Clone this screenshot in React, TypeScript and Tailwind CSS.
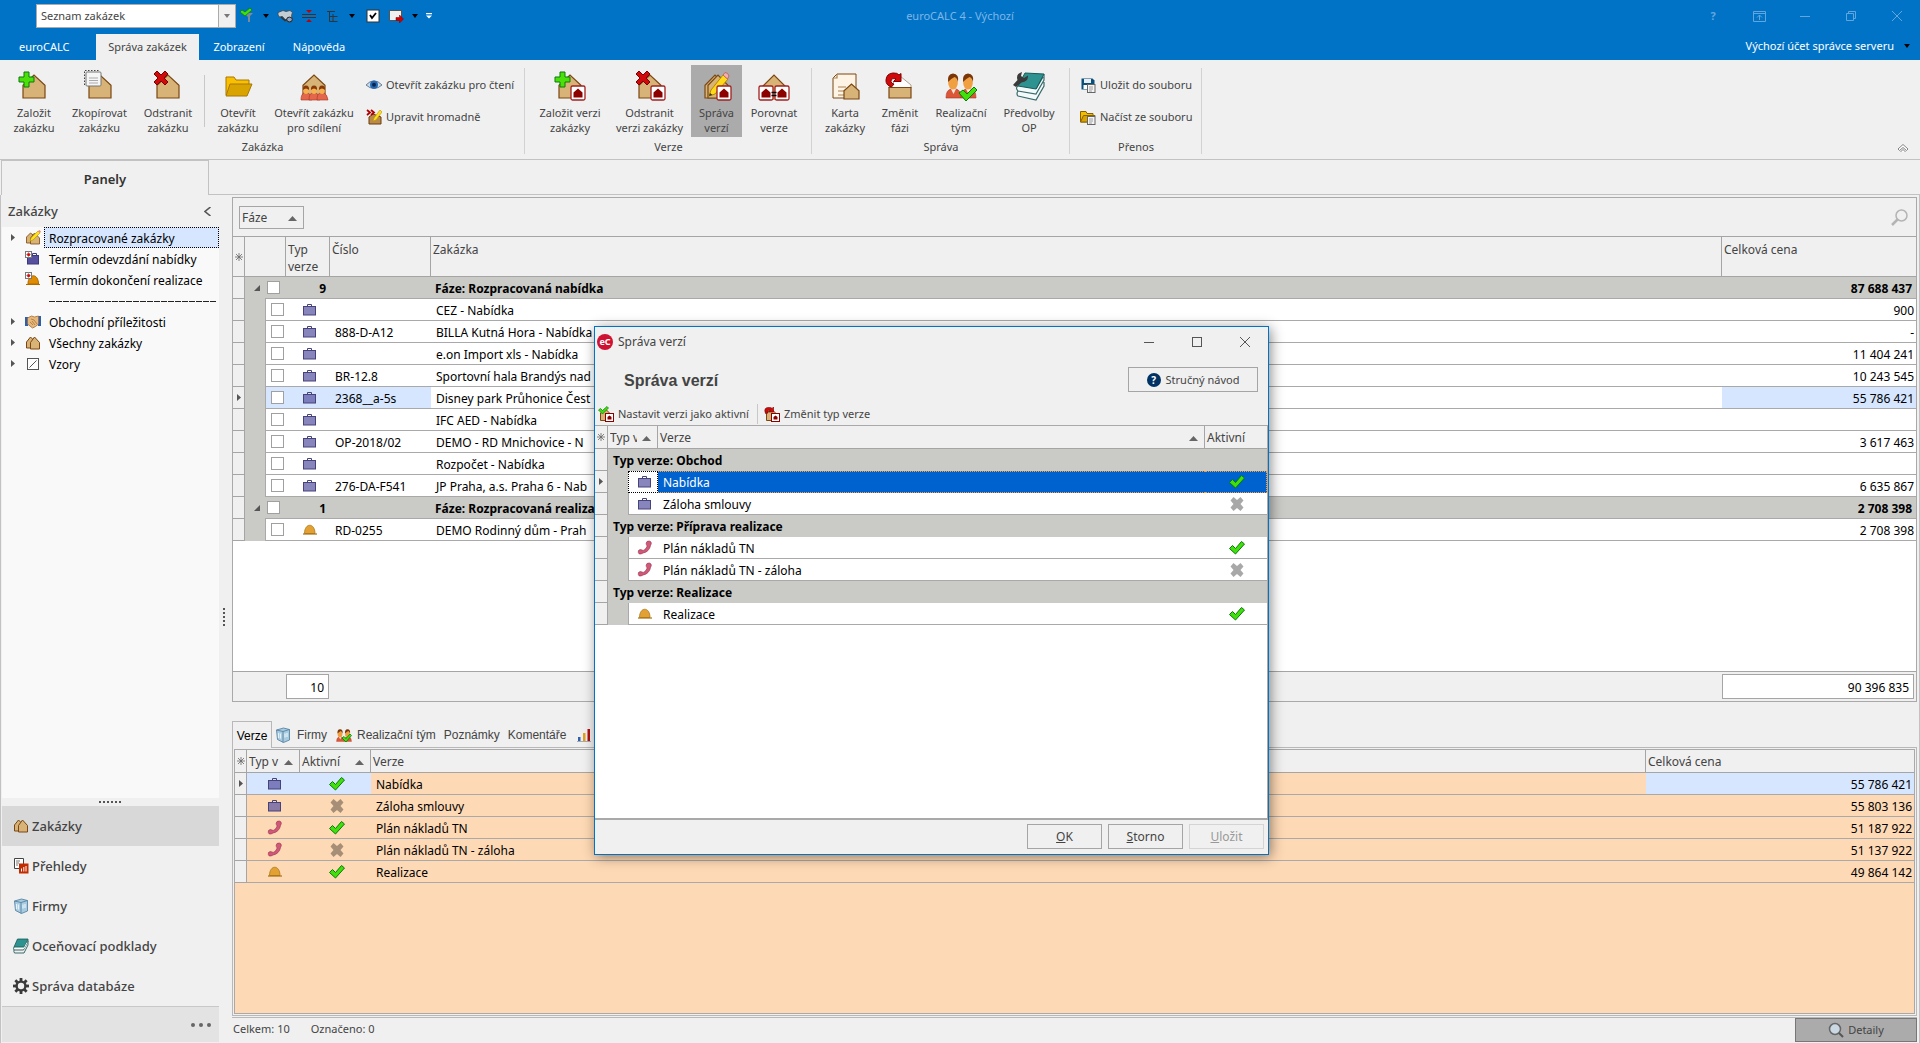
import type { ReactNode } from "react";

type IconProps = { className?: string };

const TAN = "#d7b377";
const BROWN = "#7a4712";

/* ---------- shared shapes ---------- */

const House = ({ x = 5, y = 6, w = 22, h = 23 }: { x?: number; y?: number; w?: number; h?: number }) => (
  <path
    d={`M${x} ${y + h}V${y + h * 0.45}L${x + w / 2} ${y}L${x + w} ${y + h * 0.45}V${y + h}Z`}
    fill={TAN}
    stroke={BROWN}
    strokeWidth="1.2"
  />
);

const PlusMark = () => <path d="M6 3h5v5h5v5h-5v5H6v-5H1V8h5z" fill="#4be00a" stroke="#0a7a0a" />;

const CrossMark = () => (
  <path d="M2 5l3-3 4 4 4-4 3 3-4 4 4 4-3 3-4-4-4 4-3-3 4-4z" fill="#d00a0a" stroke="#7c0000" />
);

const Badge = ({ x, y }: { x: number; y: number }) => (
  <g>
    <rect x={x} y={y} width="14" height="14" rx="1.5" fill="#fff" stroke="#a02020" strokeWidth="1.3" />
    <path d={`M${x + 2.5} ${y + 11.5}V${y + 6.5}L${x + 7} ${y + 2.5}l4.500 4v5z`} fill="#8c0000" />
  </g>
);

const Pencil = () => (
  <g>
    <path d="M8 27l2-6L22 6l5 4-13 15z" fill="#ffd91a" stroke="#b88a00" />
    <path d="M22 6l2-2.500q3 0 4 3.500l-1.500 3z" fill="#f4b0b0" stroke="#b86a6a" />
    <path d="M8 27l1-3 2.500 2z" fill="#333" />
  </g>
);

const PeoplePair = () => (
  <g>
    {[8, 23].map((cx) => (
      <g key={cx}>
        <path d={`M${cx - 7} 29q0-8 5-9h5q5 1 5 9z`} fill="#dc5638" stroke="#a8321c" strokeWidth=".6" />
        <path d={`M${cx - 2} 20l2.500 5 2.500-5z`} fill="#fbe6d8" />
        <ellipse cx={cx} cy="14" rx="4.800" ry="6.500" fill="#f0a040" />
        <path d={`M${cx - 5} 13q-1-8 5-8.500q6.500.5 5 8.500q-1-4-3.500-5q-4 2-6.500 5z`} fill="#7a3608" />
      </g>
    ))}
  </g>
);

const PeopleTrio = () => (
  <g>
    {[8, 16, 24].map((cx) => (
      <g key={cx}>
        <path d={`M${cx - 5} 31q0-6 3-7h4q3 1 4 7z`} fill="#e2674c" stroke="#a8321c" strokeWidth=".6" />
        <ellipse cx={cx} cy="21.500" rx="2.800" ry="3.500" fill="#f6b050" />
        <path d={`M${cx - 3} 21q-.5-4.500 3-4.500t3 4.500q-3-3-6 0z`} fill="#8a3a08" />
      </g>
    ))}
  </g>
);

const Svg32 = ({ children }: { children: ReactNode }) => (
  <svg viewBox="0 0 32 32" className="size-8 shrink-0">
    {children}
  </svg>
);

const Svg16 = ({ children, className = "" }: { children: ReactNode; className?: string }) => (
  <svg viewBox="0 0 16 16" className={`size-4 shrink-0 ${className}`}>
    {children}
  </svg>
);

/* ---------- small icons ---------- */

const CheckIcon = () => (
  <Svg16>
    <path d="M.5 8.500l3-3 3 3 6-7 3 2.500-9 10z" fill="#41e00c" stroke="#087a08" strokeWidth="1" />
  </Svg16>
);

const GrayCross = () => (
  <Svg16>
    <path d="M1.500 4.500l3-3.500 3.500 3 3.500-3 3 3.500-3 3.500 3 3.500-3 3.500-3.500-3-3.500 3-3-3.500 3-3.500z" fill="#000" fillOpacity=".34" />
  </Svg16>
);

const CaseIcon = () => (
  <Svg16>
    <path d="M5.500 4V2.500h4V4" fill="none" stroke="#46427a" />
    <rect x="1.500" y="4.500" width="12" height="8.500" fill="#5550a0" fillOpacity=".7" stroke="#46427a" />
  </Svg16>
);

const HelmetIcon = () => (
  <Svg16>
    <path d="M2.500 11.500C2.500.5 13 .5 13 11.500z" fill="#e3a133" stroke="#a87818" strokeWidth=".8" />
    <path d="M1 12h14" stroke="#a8700c" strokeWidth="1.200" />
  </Svg16>
);

const PhoneIcon = () => (
  <Svg16>
    <path
      d="M10 1.500q2.500-1.200 4 .5.8 1.500-.5 3.500-.5 3-2.500 5-2 2-5 2.500-2 1.500-4 .8Q.800 12.500 1.500 10.500q1.500-1.500 3.500-.5 1 .8 2 .2 2.500-1.700 3.200-4.200Q9 4.500 9.200 3.200z"
      fill="#cf5a78"
      stroke="#a23454"
      strokeWidth=".7"
    />
  </Svg16>
);

const HousesIcon = () => (
  <Svg16>
    <path d="M1.500 13V7l4-5 5 5v6z" fill={TAN} stroke={BROWN} />
    <path d="M5.500 14V7.500l4-5.500 5 5.500V14z" fill={TAN} stroke={BROWN} />
  </Svg16>
);

const HousesPencilIcon = () => (
  <Svg16>
    <path d="M1.500 13V7l4-4 4 3v7z" fill={TAN} stroke={BROWN} strokeWidth=".8" />
    <path d="M5.500 14V8l4-5 5 5v6z" fill={TAN} stroke={BROWN} strokeWidth=".8" />
    <path d="M5 11l1-3 7-7 2 2-7 7z" fill="#ffe01a" stroke="#b89000" strokeWidth=".6" />
    <path d="M13 1l2 2 1-1.500L14.500 0z" fill="#e88" />
  </Svg16>
);

const RedGrid = () => (
  <g>
    <rect x=".5" y=".5" width="6" height="6" fill="#fff" stroke="#777" />
    <path d="M3.500 0v7M0 3.500h7" stroke="#888" strokeWidth=".7" />
    <rect x="2.300" y="2.300" width="2.600" height="2.600" fill="#e00000" />
  </g>
);

const CaseDateIcon = () => (
  <Svg16>
    <path d="M7.500 4V2.500h4V4" fill="none" stroke="#3c387c" />
    <rect x="2.500" y="4.500" width="11" height="8.500" fill="#56509e" stroke="#3c387c" />
    <RedGrid />
  </Svg16>
);

const HelmetDateIcon = () => (
  <Svg16>
    <path d="M3 12C3 1 13.500 1 13.500 12z" fill="#e08c00" stroke="#b06a00" />
    <path d="M1 12.500h14" stroke="#b06a00" />
    <RedGrid />
  </Svg16>
);

const HandshakeIcon = () => (
  <Svg16>
    <path d="M0 3h3v9H0zM13 2h3v10h-3z" fill="#2c5fb0" />
    <path d="M2.500 4l4-2 3 1 4-1v8l-3 2.500-3 1.500-5-4z" fill="#e6b87c" stroke="#a06a34" strokeWidth=".8" />
    <path d="M6 5l3 1 3 4M5 8l3 3M7 7l3 4" stroke="#a06a34" strokeWidth=".7" fill="none" />
  </Svg16>
);

const SlashBoxIcon = () => (
  <Svg16>
    <rect x="2.500" y="2.500" width="11" height="11" fill="#fff" stroke="#555" />
    <path d="M4.500 11.500l7-7" stroke="#555" />
  </Svg16>
);

const FirmIcon = () => (
  <Svg16>
    <path d="M1.500 3l7-2 6 1.500V13l-6 2.500-6-3z" fill="#a9cbe0" stroke="#4b7a9a" strokeWidth=".8" />
    <path d="M1.500 3l6.500 1.500 6.500-2M8 4.500v11" stroke="#4b7a9a" strokeWidth=".8" fill="none" />
    <path d="M3.500 6v5M5.500 6.500v5M10 6.500v4M12 6v4" stroke="#e4f3fb" strokeWidth="1.200" />
  </Svg16>
);

const BooksIcon = () => (
  <Svg16>
    <path d="M4.500 1H15l-3.500 8H1z" fill="#2e9290" stroke="#145a58" strokeWidth=".8" />
    <path d="M1 9q-1 1.500 0 3h9.500L15 3.500v-2M1 12q-.5 1.500.5 3H11l4-8V3" fill="none" stroke="#3a6a6a" />
    <path d="M2 10.500h9l3-6" stroke="#fff" strokeWidth=".8" fill="none" />
  </Svg16>
);

const ReportIcon = () => (
  <Svg16>
    <path d="M1.500.5h9v10h-9z" fill="#fff" stroke="#444" />
    <path d="M3 3h4M3 5h3M3 7h2" stroke="#777" />
    <rect x="6" y="5.500" width="9.500" height="10" fill="#c22c00" />
    <path d="M8.500 13.500v-3M10.800 13.500V9M13 13.500V8" stroke="#fff" />
  </Svg16>
);

const GearIcon = () => (
  <Svg16>
    {[0, 45, 90, 135].map((a) => (
      <rect key={a} x="6.600" y="0" width="2.800" height="16" fill="#3a3a3a" transform={`rotate(${a} 8 8)`} />
    ))}
    <circle cx="8" cy="8" r="5.600" fill="#3a3a3a" />
    <circle cx="8" cy="8" r="3.200" fill="#f0f0f0" />
  </Svg16>
);

const TeamIcon = () => (
  <Svg16>
    <g transform="scale(.5)">
      <PeoplePair />
      <path d="M12 22l4-3 4 4 8-9 3 3-11 13z" fill="#41e00c" stroke="#087a08" strokeWidth="1.500" />
    </g>
  </Svg16>
);

const BarsIcon = () => (
  <Svg16>
    <path d="M1 14.500h14" stroke="#aaa" />
    <path d="M2 10h2.500v4H2z" fill="#2c62b0" />
    <path d="M7 6h2.500v8H7z" fill="#e0a020" />
    <path d="M11.500 2H14v12h-2.500z" fill="#b01010" />
  </Svg16>
);

const EyeIcon = () => (
  <Svg16>
    <path d="M0 8q8-8.500 16 0Q8 15 0 8z" fill="#c9dcec" stroke="#6a7f94" />
    <circle cx="8" cy="7.800" r="4" fill="#2468b4" />
    <circle cx="8" cy="7.800" r="2" fill="#0a2450" />
  </Svg16>
);

const BulkEditIcon = () => (
  <Svg16>
    <path d="M3 15V8l4-3 8 3v7z" fill="#b98a4a" stroke="#6c3d0c" />
    <path d="M1 1l3 2.500L1 6M5 1l3 2.500L5 6" fill="none" stroke="#b00000" strokeWidth="1.800" />
    <path d="M7 12l1-3 6-8 2 2-6 8z" fill="#ffe01a" stroke="#b89000" strokeWidth=".6" />
  </Svg16>
);

const SaveFileIcon = () => (
  <Svg16>
    <path d="M1.500 1.500h11l2 2v9h-13z" fill="#0b4f78" />
    <rect x="4" y="2" width="7" height="4" fill="#e6eef4" />
    <rect x="3.500" y="8" width="6" height="4" fill="#fff" />
    <rect x="7.500" y="7.500" width="7.500" height="8" fill="#f4f4f4" stroke="#666" />
    <path d="M9 10h4M9 12h4M9 14h3" stroke="#888" strokeWidth=".8" />
  </Svg16>
);

const LoadFileIcon = () => (
  <Svg16>
    <path d="M.5 13V2.500H6l1 2h6V13z" fill="#f2bf00" stroke="#8a6200" />
    <path d="M.5 13l3-6.500H15L12 13z" fill="#d9a400" stroke="#8a6200" />
    <rect x="7.500" y="7.500" width="7.500" height="8" fill="#f4f4f4" stroke="#666" />
    <path d="M9 10h4M9 12h4M9 14h3" stroke="#888" strokeWidth=".8" />
  </Svg16>
);

const ActivateIcon = () => (
  <Svg16>
    <path d="M2.500 14.500V7l5-4 5 5v6.500z" fill={TAN} stroke={BROWN} />
    <rect x="7.500" y="7.500" width="8" height="8" fill="#fff" stroke="#8c0000" />
    <path d="M9.500 13.500V11l2-1.500 2 1.500v2.500z" fill="#8c0000" />
    <path d="M.5 4l2-1.500 2 2L9 .5l1.500 1.500-6 6z" fill="#41e00c" stroke="#087a08" strokeWidth=".7" />
  </Svg16>
);

const ChangeTypeIcon = () => (
  <Svg16>
    <path d="M2.500 14.500V7l5-4 5 5v6.500z" fill={TAN} stroke={BROWN} />
    <rect x="7.500" y="7.500" width="8" height="8" fill="#fff" stroke="#8c0000" />
    <path d="M9.500 13.500V11l2-1.500 2 1.500v2.500z" fill="#8c0000" />
    <path d="M1.500 7.500Q-1 1 5.500 1.500q2 0 2.500 1L9.500 1v5H5l1.500-1.500Q3.500 3 4 7z" fill="#d00a0a" stroke="#6c0000" strokeWidth=".6" />
  </Svg16>
);

const SortUp = () => (
  <svg viewBox="0 0 9 5" className="h-[5px] w-[9px] shrink-0">
    <path d="M0 5l4.500-5L9 5z" fill="#666" />
  </svg>
);

const CaretDown = ({ className = "" }: IconProps) => (
  <svg viewBox="0 0 6 4" className={`h-1 w-1.5 shrink-0 ${className}`}>
    <path d="M0 0h6L3 4z" fill="currentColor" />
  </svg>
);

const RowMarker = () => (
  <svg viewBox="0 0 4 7" className="mx-auto h-[7px] w-1">
    <path d="M0 0l4 3.500L0 7z" fill="#555" />
  </svg>
);

const Asterisk = () => (
  <svg viewBox="0 0 8 8" className="mx-auto size-2">
    <path d="M4 0v8M0 4h8M1 1l6 6M7 1L1 7" stroke="#666" strokeWidth=".8" />
  </svg>
);

/* ---------- ribbon ---------- */

type BigButtonProps = { icon: ReactNode; lines: [string, string]; width: string; active?: boolean };

const BigButton = ({ icon, lines, width, active }: BigButtonProps) => (
  <button
    type="button"
    className={`flex h-[72px] flex-col items-center pt-1 ${width} ${active ? "bg-[#ababab]" : ""}`}
  >
    <Svg32>{icon}</Svg32>
    <span className="mt-1 block leading-[15px] whitespace-nowrap">
      {lines[0]}
      <br />
      {lines[1]}
    </span>
  </button>
);

const SmallButton = ({ icon, label }: { icon: ReactNode; label: string }) => (
  <button type="button" className="flex h-4 items-center gap-1 whitespace-nowrap">
    {icon}
    {label}
  </button>
);

const RibbonGroup = ({ caption, children }: { caption: string; children: ReactNode }) => (
  <section className="relative flex flex-col pt-[5px] after:absolute after:top-2 after:right-0 after:h-[86px] after:w-px after:bg-[#d2d2d2]">
    <div className="flex h-[74px] items-start">{children}</div>
    <div className="text-center leading-4">{caption}</div>
  </section>
);

const Ribbon = () => (
  <div className="flex h-[100px] shrink-0 border-b border-[#c2c2c2] text-[11px] text-[#444]">
    <RibbonGroup caption="Zakázka">
      <div className="flex pl-0.5">
        <BigButton width="w-16" lines={["Založit", "zakázku"]} icon={<><House /><PlusMark /></>} />
        <BigButton
          width="w-[67px]"
          lines={["Zkopírovat", "zakázku"]}
          icon={
            <>
              <House />
              <path d="M.5 16V1.500h15" fill="none" stroke="#444" strokeDasharray="1.500 1.500" />
              <rect x="2" y="3" width="15" height="14" rx="1" fill="#f6f6f6" stroke="#777" />
              <path d="M5 9h9M5 11.500h9M5 14h9" stroke="#aaa" />
            </>
          }
        />
        <BigButton width="w-[70px]" lines={["Odstranit", "zakázku"]} icon={<><House /><CrossMark /></>} />
      </div>
      <div className="mt-2.5 mr-0.5 ml-px h-[52px] w-px bg-[#c8c8c8]" />
      <BigButton
        width="w-[62px]"
        lines={["Otevřít", "zakázku"]}
        icon={
          <>
            <path d="M4 26V8h8l2 3h13v5" fill="#f8c000" stroke="#a87800" />
            <path d="M4 27l4-12h22l-5 12z" fill="#d9a400" stroke="#a87800" />
          </>
        }
      />
      <BigButton width="w-[90px]" lines={["Otevřít zakázku", "pro sdílení"]} icon={<><House /><PeopleTrio /></>} />
      <div className="flex w-[166px] flex-col gap-4 pt-3 pl-[7px]">
        <SmallButton icon={<EyeIcon />} label="Otevřít zakázku pro čtení" />
        <SmallButton icon={<BulkEditIcon />} label="Upravit hromadně" />
      </div>
    </RibbonGroup>

    <RibbonGroup caption="Verze">
      <div className="flex pr-1.5 pl-[7px]">
        <BigButton width="w-[76px]" lines={["Založit verzi", "zakázky"]} icon={<><House /><PlusMark /><Badge x={17} y={17} /></>} />
        <BigButton width="w-[83px]" lines={["Odstranit", "verzi zakázky"]} icon={<><House /><CrossMark /><Badge x={17} y={17} /></>} />
        <BigButton width="w-[51px]" active lines={["Správa", "verzí"]} icon={<><House x={4} w={20} /><House x={7} w={20} /><Pencil /><Badge x={16} y={17} /></>} />
        <BigButton
          width="w-16"
          lines={["Porovnat", "verze"]}
          icon={
            <>
              <path d="M5 28V17L16 6l11 11v11z" fill={TAN} stroke={BROWN} strokeWidth="1.200" />
              <path d="M14 16h4v15h-4z" fill={TAN} />
              <Badge x={1} y={17} />
              <Badge x={17} y={17} />
              <path d="M13.500 23.500h5M13.500 26.500h5" stroke="#000" strokeWidth="1.500" />
            </>
          }
        />
      </div>
    </RibbonGroup>

    <RibbonGroup caption="Správa">
      <div className="flex pr-[9px] pl-[3px]">
        <BigButton
          width="w-[60px]"
          lines={["Karta", "zakázky"]}
          icon={
            <>
              <path d="M4 29V9l4-4h19v24z" fill="#fdf4e6" stroke={BROWN} />
              <path d="M8 5v4H4M9 18h8M9 22h8M9 26h8" fill="none" stroke="#a88050" strokeWidth="1.200" />
              <House x={15} y={15} w={15} h={15} />
            </>
          }
        />
        <BigButton
          width="w-[50px]"
          lines={["Změnit", "fázi"]}
          icon={
            <>
              <path d="M5 18l11-11 11 9v3H5z" fill="#fff" stroke="#b0a090" />
              <path d="M5 18.500h22V29H5z" fill={TAN} stroke={BROWN} strokeWidth="1.200" />
              <path
                d="M7.500 18Q1.500 16 2 11q.5-6.500 7-7 4.500-.3 6 2l2-1.500v8h-7.500L12 10q-5-1.500-5 2.500 0 2 3 2.500z"
                fill="#d00a0a"
                stroke="#7c0000"
              />
            </>
          }
        />
        <BigButton
          width="w-[72px]"
          lines={["Realizační", "tým"]}
          icon={<><PeoplePair /><path d="M14 24l4-3 4 4 7-7 3 3-11 11z" fill="#41e00c" stroke="#087a08" /></>}
        />
        <BigButton
          width="w-16"
          lines={["Předvolby", "OP"]}
          icon={
            <>
              <path d="M4 18q-2 2 0 4 -1 3 1 6l18 3 8-14V5l-9 13z" fill="#f4fafa" />
              <path d="M5 17q-3 2 0 5l18 3 8-14V5M5 22q-2 3 0 5l18 4 8-14v-4M23 20l7-12" fill="none" stroke="#3a6a6a" strokeWidth="1.200" />
              <path d="M12 4l19 1-8 15-18-3z" fill="#2e9290" stroke="#145a58" />
              <path d="M0 16l4.500-5Q2.500 5 9 3L8 7l3 2 4-2.500q.5 6-6.500 7L3 18z" fill="#3a3a3a" />
            </>
          }
        />
      </div>
    </RibbonGroup>

    <RibbonGroup caption="Přenos">
      <div className="flex w-[132px] flex-col gap-4 pt-3 pl-2.5">
        <SmallButton icon={<SaveFileIcon />} label="Uložit do souboru" />
        <SmallButton icon={<LoadFileIcon />} label="Načíst ze souboru" />
      </div>
    </RibbonGroup>

    <button type="button" aria-label="Sbalit pás karet" className="mt-auto mr-3 mb-1.5 ml-auto">
      <svg viewBox="0 0 10 9" className="block h-[9px] w-2.5">
        <path d="M0 5l5-4.500L10 5l-1.500 1.500L5 3.500 1.500 6.500zM2.500 8L5 5.500 7.500 8" fill="#fff" stroke="#777" strokeWidth=".9" />
      </svg>
    </button>
  </div>
);

/* ---------- title bar ---------- */

const TitleBar = () => (
  <header className="relative flex h-[60px] shrink-0 flex-col justify-between bg-[#0173c7] text-[11px] text-white">
    <div className="flex h-8 items-center">
      <div className="relative ml-9 h-6 w-[200px]">
        <select
          aria-label="Seznam"
          className="block h-full w-full appearance-none border border-[#ababab] bg-white pl-1 text-[11px] text-[#444] outline-none"
        >
          <option>Seznam zakázek</option>
        </select>
        <span className="pointer-events-none absolute top-px right-px flex h-[22px] w-[17px] items-center justify-center border-l border-[#ababab] bg-[#f0f0f0] text-[#777]">
          <CaretDown />
        </span>
      </div>
      <div className="ml-1 flex items-center text-black">
        <Svg16>
          <path d="M4 5h9l-3 3v6H8V9z" fill="#7c8b98" />
          <path d="M0 4l2-2 3 2 5-4 2 2-7 6z" fill="#41e00c" stroke="#087a08" strokeWidth=".7" />
        </Svg16>
        <CaretDown className="ml-[7px]" />
        <Svg16 className="ml-2">
          <path d="M1 4.500l5-2 3 1 4-1 2.500 2-1 3 1 5-3 2-4-2.500-3-3.500-3 .5L1 7z" fill="#c3cdd4" stroke="#444" strokeWidth=".8" />
          <ellipse cx="12.500" cy="11.500" rx="2.800" ry="2.400" fill="#8aa4c8" stroke="#222" />
          <path d="M4 9l4 3.500 2-1" stroke="#333" strokeWidth="1.500" fill="none" />
        </Svg16>
        <Svg16 className="ml-2">
          <path d="M1 6.500h14M1 9.500h14" stroke="#333" />
          <path d="M5 2h6L8 5zM5 14h6l-3-3z" fill="#c00000" />
        </Svg16>
        <Svg16 className="ml-2">
          <path d="M2 3.500h8M4.500 3v10.500M4.500 8.500h8M4.500 13.500h8M8 6v7" stroke="#333" fill="none" />
        </Svg16>
        <CaretDown className="ml-2" />
        <Svg16 className="ml-2.5">
          <rect x="2" y="2" width="12" height="12" fill="#fff" stroke="#333" />
          <path d="M5 7l2 3 4-5" fill="none" stroke="#000" strokeWidth="1.800" />
        </Svg16>
        <Svg16 className="ml-[7px]">
          <rect x="1.500" y="2.500" width="12" height="10" fill="#f0f0f0" stroke="#555" />
          <path d="M8 9.500h3.500V7l4 4-4 4v-2.500H8z" fill="#d00000" stroke="#700" strokeWidth=".5" />
        </Svg16>
        <CaretDown className="ml-2" />
        <svg viewBox="0 0 6 6" className="ml-2 size-1.5">
          <path d="M0 0h6v1.200H0zM0 2.500h6L3 5.500z" fill="#fff" />
        </svg>
      </div>
    </div>
    <h1 className="absolute top-2 left-1/2 -translate-x-1/2 leading-4 text-[#7db6e8]">euroCALC 4 - Výchozí</h1>
    <nav className="flex h-[26px] items-center">
      <a href="#eurocalc" className="w-24 pl-[19px]">euroCALC</a>
      <a href="#sprava" className="flex h-full w-[103px] items-center justify-center bg-[#f0f0f0] text-[#444]">Správa zakázek</a>
      <a href="#zobrazeni" className="w-20 text-center">Zobrazení</a>
      <a href="#napoveda" className="w-20 text-center">Nápověda</a>
    </nav>
    <div className="absolute top-2 right-0 flex h-4 text-[#63a6de]">
      <button type="button" className="w-[46px] font-bold">?</button>
      <button type="button" aria-label="Možnosti pásu" className="flex w-[46px] items-center justify-center">
        <svg viewBox="0 0 13 11" className="h-[11px] w-[13px]" fill="none" stroke="currentColor">
          <path d="M.5.5h12v10H.500zM.5 2.500h12M6.500 9V4M4 6.500L6.500 4 9 6.500" />
        </svg>
      </button>
      <button type="button" aria-label="Minimalizovat" className="flex w-[46px] items-center justify-center">
        <i className="h-px w-2.5 bg-current" />
      </button>
      <button type="button" aria-label="Obnovit" className="flex w-[46px] items-center justify-center">
        <svg viewBox="0 0 10 10" className="size-2.5" fill="none" stroke="currentColor">
          <path d="M.5 2.500h7v7h-7zM2.500 2.500v-2h7v7h-2" />
        </svg>
      </button>
      <button type="button" aria-label="Zavřít" className="flex w-[46px] items-center justify-center">
        <svg viewBox="0 0 10 10" className="size-2.5" fill="none" stroke="currentColor">
          <path d="M0 0l10 10M10 0L0 10" />
        </svg>
      </button>
    </div>
    <button type="button" className="absolute top-[38px] right-2.5 flex items-center gap-2.5 leading-4">
      Výchozí účet správce serveru
      <CaretDown className="text-black" />
    </button>
  </header>
);

/* ---------- sidebar ---------- */

const TREE: { label: string; icon: ReactNode; open?: boolean; active?: boolean }[] = [
  { label: "Rozpracované zakázky", icon: <HousesPencilIcon />, open: true, active: true },
  { label: "Termín odevzdání nabídky", icon: <CaseDateIcon /> },
  { label: "Termín dokončení realizace", icon: <HelmetDateIcon /> },
  { label: "", icon: null },
  { label: "Obchodní příležitosti", icon: <HandshakeIcon />, open: true },
  { label: "Všechny zakázky", icon: <HousesIcon />, open: true },
  { label: "Vzory", icon: <SlashBoxIcon />, open: true },
];

const NAV = [
  { label: "Zakázky", icon: <HousesIcon /> },
  { label: "Přehledy", icon: <ReportIcon /> },
  { label: "Firmy", icon: <FirmIcon /> },
  { label: "Oceňovací podklady", icon: <BooksIcon /> },
  { label: "Správa databáze", icon: <GearIcon /> },
];

const Sidebar = () => (
  <aside className="flex w-[219px] shrink-0 flex-col border-l border-[#c2c2c2] pb-px pl-px text-[#444]">
    <div className="flex h-8 shrink-0 items-center justify-between pr-2 pl-1.5 text-[13px] font-medium">
      Zakázky
      <button type="button" aria-label="Sbalit panel">
        <svg viewBox="0 0 7 9" className="h-[9px] w-[7px]" fill="none" stroke="#555" strokeWidth="1.600">
          <path d="M6.500 0L1 4.500l5.500 4.500" />
        </svg>
      </button>
    </div>
    <ul className="flex-1 bg-[#f9f9f9] text-black">
      {TREE.map((item, i) =>
        item.label ? (
          <li key={i} className="flex h-[21px] items-center">
            <span className="w-[23px] pl-[9px]">
              {item.open && (
                <svg viewBox="0 0 4 7" className="h-[7px] w-1">
                  <path d="M0 0l4 3.500L0 7z" fill="#555" />
                </svg>
              )}
            </span>
            {item.icon}
            <span
              className={`ml-[3px] flex h-[21px] flex-1 items-center border border-dotted pt-0.5 pl-1 whitespace-nowrap ${
                item.active ? "border-black bg-[#d5e6fe]" : "border-transparent"
              }`}
            >
              {item.label}
            </span>
          </li>
        ) : (
          <li key={i} className="flex h-[21px] items-center pt-0.5 pl-[47px]">
            <svg className="h-px w-[168px]">
              <path d="M0 .5h168" stroke="#222" strokeDasharray="6 1" />
            </svg>
          </li>
        )
      )}
    </ul>
    <div className="flex h-2 shrink-0 items-center justify-center gap-px">
      {[...Array(6)].map((_, i) => (
        <i key={i} className="mr-px size-0.5 bg-[#555]" />
      ))}
    </div>
    <nav className="shrink-0 text-[13px] font-medium">
      {NAV.map((item, i) => (
        <a key={item.label} href="#nav" className={`flex h-10 items-center gap-[3px] pl-[11px] ${i === 0 ? "bg-[#d8d8d8]" : ""}`}>
          {item.icon}
          {item.label}
        </a>
      ))}
    </nav>
    <button type="button" aria-label="Další" className="flex h-9 shrink-0 items-center justify-end gap-1 border-t border-[#c8c8c8] bg-[#e3e3e3] pr-2">
      <i className="size-1 rounded-full bg-[#666]" />
      <i className="size-1 rounded-full bg-[#666]" />
      <i className="size-1 rounded-full bg-[#666]" />
    </button>
  </aside>
);

/* ---------- orders grid ---------- */

type Order = { type: "case" | "helmet"; code: string; name: string; price: string; current?: boolean };

const GROUPS: { count: number; title: string; total: string; orders: Order[] }[] = [
  {
    count: 9,
    title: "Fáze: Rozpracovaná nabídka",
    total: "87 688 437",
    orders: [
      { type: "case", code: "", name: "CEZ - Nabídka", price: "900" },
      { type: "case", code: "888-D-A12", name: "BILLA Kutná Hora - Nabídka", price: "-" },
      { type: "case", code: "", name: "e.on Import xls - Nabídka", price: "11 404 241" },
      { type: "case", code: "BR-12.8", name: "Sportovní hala Brandýs nad", price: "10 243 545" },
      { type: "case", code: "2368__a-5s", name: "Disney park Průhonice Čest", price: "55 786 421", current: true },
      { type: "case", code: "", name: "IFC AED - Nabídka", price: "" },
      { type: "case", code: "OP-2018/02", name: "DEMO - RD Mnichovice - N", price: "3 617 463" },
      { type: "case", code: "", name: "Rozpočet - Nabídka", price: "" },
      { type: "case", code: "276-DA-F541", name: "JP Praha, a.s. Praha 6 - Nab", price: "6 635 867" },
    ],
  },
  {
    count: 1,
    title: "Fáze: Rozpracovaná realiza",
    total: "2 708 398",
    orders: [{ type: "helmet", code: "RD-0255", name: "DEMO Rodinný dům - Prah", price: "2 708 398" }],
  },
];

const Tick = ({ label }: { label: string }) => (
  <input type="checkbox" aria-label={label} className="block size-[13px] appearance-none border border-[#a0a0a0] bg-white" />
);

const th = "border-r border-b border-[#a5a5a5] px-0.5 text-left font-normal";

const OrdersGrid = () => (
  <section className="flex min-h-0 flex-1 flex-col border border-[#a9a9a9]">
    <div className="flex h-[39px] shrink-0 items-center justify-between border-b border-[#a5a5a5] pr-2 pl-1.5 text-[#444]">
      <button type="button" className="flex h-[23px] w-[65px] items-center justify-between border border-[#a5a5a5] pt-0.5 pr-1.5 pl-0.5">
        Fáze
        <SortUp />
      </button>
      <svg viewBox="0 0 17 17" className="size-[17px]" fill="none" stroke="#b4b4b4">
        <circle cx="10.500" cy="6.500" r="5.500" strokeWidth="1.500" />
        <path d="M6.500 10.500L1 16" strokeWidth="2.500" />
      </svg>
    </div>
    <div className="min-h-0 flex-1 overflow-hidden bg-white">
      <table className="w-full table-fixed border-separate border-spacing-0">
        <colgroup>
          <col className="w-3" />
          <col className="w-5" />
          <col className="w-[21px]" />
          <col className="w-11" />
          <col className="w-[101px]" />
          <col />
          <col className="w-[194px]" />
        </colgroup>
        <thead className="bg-[#f0f0f0] align-top text-[#444]">
          <tr className="h-10">
            <th className="border-r border-b border-[#a5a5a5] p-0 align-middle"><Asterisk /></th>
            <th className={th} colSpan={2} />
            <th className={`${th} pt-1 leading-[17px]`}>Typ<br />verze</th>
            <th className={`${th} pt-1 leading-[17px]`}>Číslo</th>
            <th className={`${th} pt-1 leading-[17px]`}>Zakázka</th>
            <th className="border-b border-[#a5a5a5] px-0.5 pt-1 text-left leading-[17px] font-normal">Celková cena</th>
          </tr>
        </thead>
        {GROUPS.map((group) => (
          <tbody key={group.title}>
            <tr className="h-[22px] bg-[#cacbc7] font-bold">
              <td className="border-r border-b border-[#a5a5a5] bg-[#f0f0f0]" />
              <td className="p-0">
                <svg viewBox="0 0 6 6" className="ml-[9px] size-1.5">
                  <path d="M6 0v6H0z" fill="#555" />
                </svg>
              </td>
              <td className="border-b border-[#a9a9a9] p-0 pl-0.5"><Tick label={group.title} /></td>
              <td className="border-b border-[#a9a9a9] pt-0.5 pr-1 pb-0 pl-0 text-right">{group.count}</td>
              <td className="border-b border-[#a9a9a9]" />
              <td className="border-b border-[#a9a9a9] px-1 pt-0.5 pb-0">{group.title}</td>
              <td className="border-b border-[#a9a9a9] pt-0.5 pr-1 pb-0 text-right">{group.total}</td>
            </tr>
            {group.orders.map((o) => (
              <tr key={o.name} className="h-[22px]">
                <td className="border-r border-b border-[#a5a5a5] bg-[#f0f0f0] p-0">{o.current && <RowMarker />}</td>
                <td className="bg-[#cacbc7] p-0" />
                <td className={`border-b border-l border-[#a9a9a9] p-0 pl-[5px] ${o.current ? "bg-[#d5e6fe]" : ""}`}>
                  <Tick label={o.name} />
                </td>
                <td className={`border-b border-[#a9a9a9] p-0 pl-4 ${o.current ? "bg-[#d5e6fe]" : ""}`}>
                  {o.type === "case" ? <CaseIcon /> : <HelmetIcon />}
                </td>
                <td className={`border-b border-[#a9a9a9] pt-0.5 pr-0 pb-0 pl-[5px] ${o.current ? "bg-[#d5e6fe]" : ""}`}>{o.code}</td>
                <td className="overflow-hidden border-b border-[#a9a9a9] pt-0.5 pr-0 pb-0 pl-[5px] whitespace-nowrap">{o.name}</td>
                <td className={`border-b border-[#a9a9a9] pt-0.5 pr-0.5 pb-0 text-right ${o.current ? "bg-[#d5e6fe]" : ""}`}>{o.price}</td>
              </tr>
            ))}
          </tbody>
        ))}
      </table>
    </div>
    <div className="flex h-[30px] shrink-0 items-center justify-between border-t border-[#a5a5a5] pr-0.5 pl-[53px]">
      <output className="flex h-[25px] w-[43px] items-center justify-end border border-[#a5a5a5] bg-white pt-0.5 pr-1">10</output>
      <output className="flex h-[25px] w-48 items-center justify-end border border-[#a5a5a5] bg-white pt-0.5 pr-1">90 396 835</output>
    </div>
  </section>
);

/* ---------- versions ---------- */

type Version = { type: "case" | "phone" | "helmet"; name: string; active: boolean; price: string };

const VERSIONS: Version[] = [
  { type: "case", name: "Nabídka", active: true, price: "55 786 421" },
  { type: "case", name: "Záloha smlouvy", active: false, price: "55 803 136" },
  { type: "phone", name: "Plán nákladů TN", active: true, price: "51 187 922" },
  { type: "phone", name: "Plán nákladů TN - záloha", active: false, price: "51 137 922" },
  { type: "helmet", name: "Realizace", active: true, price: "49 864 142" },
];

const TYPE_ICONS = { case: <CaseIcon />, phone: <PhoneIcon />, helmet: <HelmetIcon /> };

const VersionsGrid = () => (
  <section className="flex h-[295px] shrink-0 flex-col">
    <div className="flex h-[27px] shrink-0 items-stretch font-['Liberation_Sans'] text-[12px] text-[#444]">
      <button type="button" className="w-10 border border-b-0 border-[#b8b8b8] pt-0.5 text-black">Verze</button>
      <div className="flex flex-1 items-center border-b border-[#b8b8b8] pt-0.5 pl-[3px]">
        <button type="button" className="flex items-center gap-1.5"><FirmIcon />Firmy</button>
        <button type="button" className="ml-[9px] flex items-center gap-[5px]"><TeamIcon />Realizační tým</button>
        <button type="button" className="ml-2">Poznámky</button>
        <button type="button" className="ml-2">Komentáře</button>
        <button type="button" aria-label="Graf" className="ml-2.5"><BarsIcon /></button>
      </div>
    </div>
    <div className="flex min-h-0 flex-1 border border-t-0 border-[#b8b8b8] p-px">
      <div className="flex-1 border border-[#a9a9a9] bg-[#fed9b5]">
        <table className="w-full table-fixed border-separate border-spacing-0">
          <colgroup>
            <col className="w-3" />
            <col className="w-[53px]" />
            <col className="w-[71px]" />
            <col />
            <col className="w-[268px]" />
          </colgroup>
          <thead className="bg-[#f0f0f0] text-[#444]">
            <tr className="h-[23px]">
              <th className="border-r border-b border-[#a5a5a5] p-0"><Asterisk /></th>
              <th className={`${th} pt-0.5 pb-0`}><span className="flex items-center justify-between pr-1 whitespace-nowrap">Typ v<SortUp /></span></th>
              <th className={`${th} pt-0.5 pb-0`}><span className="flex items-center justify-between pr-1">Aktivní<SortUp /></span></th>
              <th className={`${th} pt-0.5 pb-0`}>Verze</th>
              <th className="border-b border-[#a5a5a5] px-0.5 pt-0.5 pb-0 text-left font-normal">Celková cena</th>
            </tr>
          </thead>
          <tbody>
            {VERSIONS.map((v, i) => (
              <tr key={v.name} className="h-[22px]">
                <td className="border-r border-b border-[#a5a5a5] bg-[#f0f0f0] p-0">{i === 0 && <RowMarker />}</td>
                <td className={`border-b border-[#a9a9a9] p-0 pl-5 ${i === 0 ? "bg-[#d5e6fe]" : ""}`}>{TYPE_ICONS[v.type]}</td>
                <td className={`border-b border-[#a9a9a9] p-0 pl-[29px] ${i === 0 ? "bg-[#d5e6fe]" : ""}`}>
                  {v.active ? <CheckIcon /> : <GrayCross />}
                </td>
                <td className="border-b border-[#a9a9a9] pt-0.5 pb-0 pl-[5px]">{v.name}</td>
                <td className={`border-b border-[#a9a9a9] pt-0.5 pr-0.5 pb-0 text-right ${i === 0 ? "bg-[#d5e6fe]" : ""}`}>{v.price}</td>
              </tr>
            ))}
          </tbody>
        </table>
      </div>
    </div>
  </section>
);

/* ---------- dialog ---------- */

const SECTIONS = [
  { title: "Typ verze: Obchod", rows: VERSIONS.slice(0, 2) },
  { title: "Typ verze: Příprava realizace", rows: VERSIONS.slice(2, 4) },
  { title: "Typ verze: Realizace", rows: VERSIONS.slice(4) },
];

const VersionDialog = () => (
  <div
    role="dialog"
    aria-label="Správa verzí"
    className="absolute top-[326px] left-[594px] flex h-[529px] w-[675px] flex-col border border-[#0173c7] bg-[#f0f0f0] shadow-[2px_2px_12px_rgba(0,0,0,0.45)]"
  >
    <div className="flex h-[30px] shrink-0 items-center pr-[18px] pl-0.5 text-[#444]">
      <span className="flex size-4 items-center justify-center rounded-full bg-[#cf1232] text-[9px] font-bold text-white">eC</span>
      <span className="ml-[5px] text-[12px]">Správa verzí</span>
      <div className="ml-auto flex items-center gap-[38px]">
        <button type="button" aria-label="Minimalizovat" className="h-px w-2.5 bg-[#555]" />
        <button type="button" aria-label="Maximalizovat" className="size-2.5 border border-[#555]" />
        <button type="button" aria-label="Zavřít">
          <svg viewBox="0 0 10 10" className="size-2.5" stroke="#555">
            <path d="M0 0l10 10M10 0L0 10" />
          </svg>
        </button>
      </div>
    </div>
    <div className="flex h-11 shrink-0 items-start justify-between pt-2.5 pr-2.5 pl-[29px]">
      <h2 className="font-['Liberation_Sans'] text-[16px] leading-7 font-bold text-[#444]">Správa verzí</h2>
      <button type="button" className="flex h-[25px] w-[130px] items-center justify-center gap-[5px] border border-[#a5a5a5] text-[11px] text-[#444]">
        <span className="flex size-[14px] items-center justify-center rounded-full bg-[#003264] text-[10px] font-bold text-white">?</span>
        Stručný návod
      </button>
    </div>
    <div className="flex h-6 shrink-0 items-center pt-0.5 pl-[3px] text-[11px] text-[#444]">
      <button type="button" className="flex w-[154px] items-center gap-1 whitespace-nowrap"><ActivateIcon />Nastavit verzi jako aktivní</button>
      <i className="mr-1.5 ml-[5px] h-5 w-px bg-[#c8c8c8]" />
      <button type="button" className="flex items-center gap-1"><ChangeTypeIcon />Změnit typ verze</button>
    </div>
    <div className="min-h-0 flex-1 border-t border-r border-b-2 border-[#a9a9a9] bg-white">
      <table className="w-full table-fixed border-separate border-spacing-0">
        <colgroup>
          <col className="w-[13px]" />
          <col className="w-5" />
          <col className="w-[30px]" />
          <col />
          <col className="w-[62px]" />
        </colgroup>
        <thead className="bg-[#f0f0f0] text-[#444]">
          <tr className="h-[23px]">
            <th className="border-r border-b border-[#a5a5a5] p-0"><Asterisk /></th>
            <th className={`${th} pt-0.5 pb-0`} colSpan={2}>
              <span className="flex items-center justify-between pr-1">
                <span className="w-[27px] overflow-hidden whitespace-nowrap">Typ v</span>
                <SortUp />
              </span>
            </th>
            <th className={`${th} pt-0.5 pb-0`}><span className="flex items-center justify-between pr-1">Verze<SortUp /></span></th>
            <th className="border-b border-[#a5a5a5] px-0.5 pt-0.5 pb-0 text-left font-normal">Aktivní</th>
          </tr>
        </thead>
        <tbody>
          {SECTIONS.flatMap((section, s) => [
            <tr key={section.title} className="h-[22px] bg-[#cacbc7] font-bold">
              <td className="border-r border-b border-[#a5a5a5] bg-[#f0f0f0]" />
              <td colSpan={4} className="px-[5px] pt-0.5 pb-0">{section.title}</td>
            </tr>,
            ...section.rows.map((v, i) => {
              const selected = s === 0 && i === 0;
              return (
                <tr key={v.name} className="h-[22px]">
                  <td className="border-r border-b border-[#a5a5a5] bg-[#f0f0f0] p-0">{selected && <RowMarker />}</td>
                  <td className="bg-[#cacbc7] p-0" />
                  <td className={`p-0 pl-2 ${selected ? "border border-dotted border-black" : "border-b border-l border-[#a9a9a9]"}`}>
                    {TYPE_ICONS[v.type]}
                  </td>
                  <td className={`pt-0.5 pb-0 pl-[5px] ${selected ? "border-y border-dotted border-[#ff9d31] bg-[#0062ce] text-white" : "border-b border-[#a9a9a9]"}`}>
                    {v.name}
                  </td>
                  <td className={`p-0 pl-6 ${selected ? "border border-l-0 border-dotted border-[#ff9d31] bg-[#0062ce]" : "border-b border-[#a9a9a9]"}`}>
                    {v.active ? <CheckIcon /> : <GrayCross />}
                  </td>
                </tr>
              );
            }),
          ])}
        </tbody>
      </table>
    </div>
    <div className="flex h-[34px] shrink-0 items-start justify-end gap-1.5 pt-1 pr-1 text-[12px] text-[#444]">
      <button type="button" className="h-[25px] w-[75px] border border-[#a5a5a5]"><u>O</u>K</button>
      <button type="button" className="h-[25px] w-[75px] border border-[#a5a5a5]"><u>S</u>torno</button>
      <button type="button" disabled className="h-[25px] w-[75px] border border-[#d4d4d4] text-[#999]"><u>U</u>ložit</button>
    </div>
  </div>
);

export default function App() {
  return (
    <div className="relative flex h-screen w-full flex-col overflow-hidden bg-[#f0f0f0] font-['Noto_Sans',sans-serif] text-[12px] leading-4 text-black">
      <TitleBar />
      <Ribbon />
      <div className="flex h-[35px] shrink-0">
        <div className="ml-px w-[208px] border-x border-t border-[#c2c2c2] pt-2.5 text-center text-[13px] font-semibold text-[#333]">Panely</div>
        <div className="flex-1 border-b border-[#c2c2c2]" />
      </div>
      <div className="flex min-h-0 flex-1">
        <Sidebar />
        <div className="flex w-[13px] shrink-0 flex-col items-center justify-center gap-0.5 pr-1 pb-1">
          {[...Array(5)].map((_, i) => (
            <i key={i} className="size-0.5 bg-[#555]" />
          ))}
        </div>
        <main className="flex min-w-0 flex-1 flex-col border-r border-[#c2c2c2] pt-0.5">
          <div className="mr-0.5 flex min-h-0 flex-1 flex-col gap-[19px]">
            <OrdersGrid />
            <VersionsGrid />
          </div>
          <footer className="mt-px mr-0.5 flex h-[26px] shrink-0 items-start border-t border-[#b8b8b8] text-[11px] text-[#444]">
            <span className="pt-[3px] pl-px">Celkem: 10</span>
            <span className="pt-[3px] pl-[21px]">Označeno: 0</span>
            <button type="button" className="ml-auto flex h-6 w-[122px] items-center justify-center gap-1 border border-[#777] bg-[#ababab]">
              <Svg16>
                <circle cx="7" cy="7" r="5.500" fill="#c9d8e2" stroke="#666" strokeWidth="1.500" />
                <path d="M11 11l4 4" stroke="#555" strokeWidth="2" />
              </Svg16>
              Detaily
            </button>
          </footer>
        </main>
      </div>
      <VersionDialog />
    </div>
  );
}
